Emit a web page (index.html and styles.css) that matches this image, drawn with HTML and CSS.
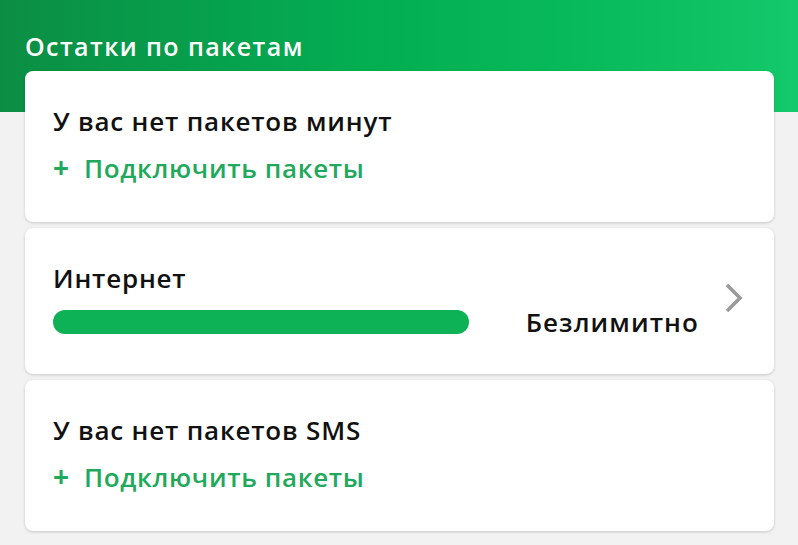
FILE: index.html
```html
<!DOCTYPE html>
<html lang="ru">
<head>
    <meta charset="UTF-8">
    <meta name="viewport" content="width=device-width, initial-scale=1.0">
    <title>Остатки по пакетам</title>
    <link rel="stylesheet" href="styles.css">
</head>
<body>

    <div class="screen">
        <h2 class="title">Остатки по пакетам</h2>

        <div class="cards">
            <div class="card">
                <div class="card-text">У вас нет пакетов минут</div>
                <a href="#" class="add-link"><span class="plus">+</span>Подключить пакеты</a>
            </div>

            <div class="card card-internet">
                <div class="internet-body">
                    <div class="card-text">Интернет</div>
                    <div class="usage-row">
                        <div class="bar"></div>
                        <div class="unlimited">Безлимитно</div>
                    </div>
                </div>
                <svg class="chevron" width="20" height="30" viewBox="0 0 20 30">
                    <path d="M3 2 L16 15 L3 28" fill="none" stroke="#9a9a9a" stroke-width="3.6"/>
                </svg>
            </div>

            <div class="card">
                <div class="card-text">У вас нет пакетов SMS</div>
                <a href="#" class="add-link"><span class="plus">+</span>Подключить пакеты</a>
            </div>
        </div>
    </div>

</body>
</html>
```

FILE: styles.css
```css
body {
    margin: 0;
    font-family: "Open Sans", "Liberation Sans", sans-serif;
    background-color: #f2f2f2;
}

.screen {
    min-height: 545px;
    background: linear-gradient(90deg, #0b8e44 0%, #03ad52 45%, #08bb5c 75%, #14c96b 100%) no-repeat top left / 100% 112px;
    padding: 0 24px 0 25px;
}

.title {
    margin: 0;
    padding-top: 30px;
    height: 71px;
    box-sizing: border-box;
    color: #ffffff;
    font-size: 25px;
    font-weight: 600;
    line-height: 32px;
    letter-spacing: 1.4px;
}

.cards {
    display: flex;
    flex-direction: column;
    gap: 6px;
}

.card {
    background-color: #ffffff;
    border-radius: 8px;
    box-shadow: 0 1px 3px rgba(0, 0, 0, 0.18);
    padding: 34px 28px 0 28px;
    height: 151px;
    box-sizing: border-box;
}

.card-text {
    color: #111111;
    font-size: 26px;
    font-weight: 600;
    line-height: 32px;
    letter-spacing: 0.8px;
}

.add-link {
    display: block;
    margin-top: 14px;
    color: #1fa95c;
    font-size: 26px;
    font-weight: 600;
    line-height: 32px;
    letter-spacing: 0.65px;
    text-decoration: none;
}

.plus {
    font-size: 28px;
    font-weight: 700;
    margin-right: 15px;
    letter-spacing: 0;
}

.card-internet {
    height: 146px;
    display: flex;
    align-items: center;
    padding-top: 0;
    padding-right: 30px;
}

.internet-body {
    flex: 1;
}

.usage-row {
    display: flex;
    align-items: center;
    margin-top: 10px;
}

.bar {
    width: 416px;
    height: 24px;
    border-radius: 12px;
    background-color: #0db256;
}

.unlimited {
    margin-left: auto;
    margin-right: -1px;
    color: #111111;
    font-size: 26px;
    font-weight: 600;
    letter-spacing: 1.1px;
}

.chevron {
    margin-left: 26px;
    margin-top: -7px;
}
```
